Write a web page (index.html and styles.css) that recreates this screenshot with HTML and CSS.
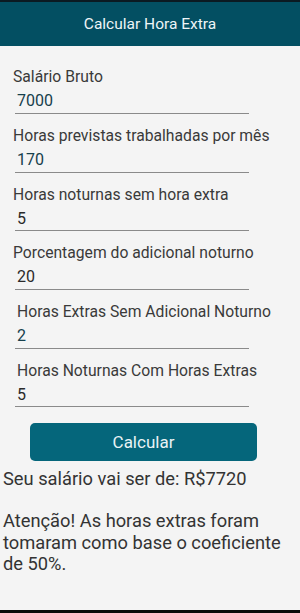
FILE: index.html
```html
<!DOCTYPE html>
<html lang="pt">
<head>
<meta charset="utf-8">
<link rel="stylesheet" href="styles.css">
</head>
<body>
<div class="screen">
  <div class="status"></div>
  <header class="appbar">Calcular Hora Extra</header>
  <main class="content">
    <div class="field">
      <div class="label">Salário Bruto</div>
      <div class="value teal">7000</div>
    </div>
    <div class="field">
      <div class="label">Horas previstas trabalhadas por mês</div>
      <div class="value teal">170</div>
    </div>
    <div class="field">
      <div class="label">Horas noturnas sem hora extra</div>
      <div class="value">5</div>
    </div>
    <div class="field">
      <div class="label">Porcentagem do adicional noturno</div>
      <div class="value">20</div>
    </div>
    <div class="field inset">
      <div class="label">Horas Extras Sem Adicional Noturno</div>
      <div class="value teal">2</div>
    </div>
    <div class="field inset">
      <div class="label">Horas Noturnas Com Horas Extras</div>
      <div class="value">5</div>
    </div>
    <div class="btn-row"><button class="btn">Calcular</button></div>
    <p class="result">Seu salário vai ser de: R$7720</p>
    <p class="note">Atenção! As horas extras foram<br>tomaram como base o coeficiente<br>de 50%.</p>
  </main>
  <div class="navbar"></div>
</div>
</body>
</html>
```
FILE: styles.css
```css
html, body {
  margin: 0;
  padding: 0;
}
body {
  font-family: Roboto, "Liberation Sans", sans-serif;
  background: #f4f4f4;
}
.screen {
  width: 300px;
  height: 613px;
  display: flex;
  flex-direction: column;
  overflow: hidden;
}
.status {
  height: 2px;
  background: #0b1a22;
}
.appbar {
  height: 44px;
  background: #034f62;
  color: #eef5f7;
  font-size: 15.5px;
  display: flex;
  align-items: center;
  justify-content: center;
  flex-shrink: 0;
}
.content {
  flex: 1;
  padding-top: 22.3px;
}
.field {
  margin: 0 51px 13px 15px;
  border-bottom: 1.3px solid #8a8a8a;
  padding-bottom: 1.8px;
}
.label {
  font-size: 15.7px;
  line-height: 18px;
  color: #3a3a3a;
  margin-left: -2px;
  margin-bottom: 4.9px;
  white-space: nowrap;
}
.inset .label {
  margin-left: 2px;
}
.value {
  font-size: 16px;
  line-height: 20px;
  color: #2a2a2a;
  padding-left: 2px;
}
.value.teal {
  color: #17404c;
}
.btn-row {
  padding: 2.4px 0 0 30px;
}
.btn {
  width: 227px;
  height: 38.5px;
  border: none;
  border-radius: 5px;
  background: #05667b;
  color: #e9f3f5;
  font-family: Roboto, "Liberation Sans", sans-serif;
  font-size: 17px;
  padding: 0;
  display: block;
}
.result, .note {
  margin: 0;
  padding-left: 3px;
  font-size: 18.3px;
  line-height: 21.3px;
  color: #333;
}
.result {
  margin-top: 6.5px;
}
.note {
  margin-top: 21.3px;
}
.navbar {
  height: 3px;
  background: #0b0b0b;
}
```
